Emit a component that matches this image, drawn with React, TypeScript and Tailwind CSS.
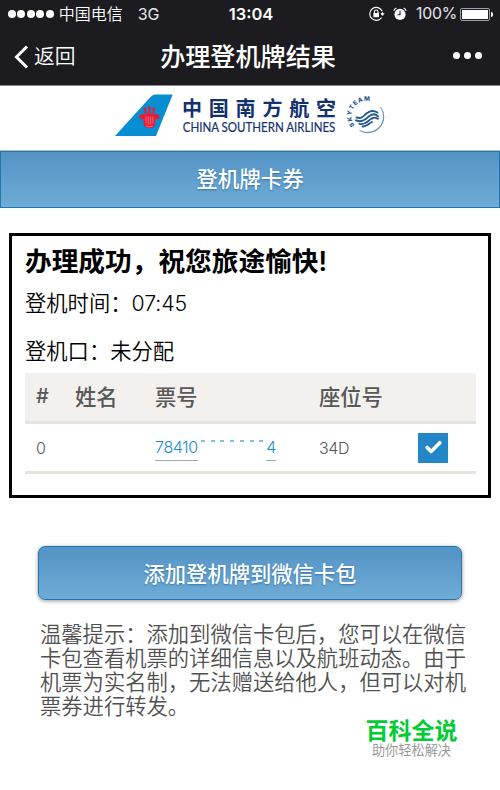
import { Check } from 'lucide-react';

interface Passenger {
  index: number;
  ticketStart: string;
  ticketEnd: string;
  seat: string;
  checked: boolean;
}

const passengers: Passenger[] = [
  { index: 0, ticketStart: '78410', ticketEnd: '4', seat: '34D', checked: true },
];

function StatusBar() {
  return (
    <div className="grid h-7 grid-cols-[1fr_auto_1fr] items-center pl-2 pr-[7px] text-[16px] leading-7">
      <div className="flex items-center">
        <div className="flex gap-[1.7px]">
          {[0, 1, 2, 3, 4].map((dot) => (
            <span key={dot} className="size-[7.8px] rounded-full bg-white" />
          ))}
        </div>
        <span className="-mt-[2px] ml-[5px] font-[350]">中国电信</span>
        <span className="ml-[15px] font-['Inter'] text-[16px] tracking-[-0.2px] text-gray-200">3G</span>
      </div>
      <span className="ml-[1px] font-['Inter'] text-[16.5px] font-semibold">13:04</span>
      <div className="flex items-center justify-end">
        <svg width="16" height="16" viewBox="0 0 16 16" fill="none" stroke="white" strokeWidth="1.1">
          <path d="M13.2 5.2A6.5 6.5 0 1 0 12.6 11.6M13.5 6.2v2.5" />
          <path d="M11.3 7.2h4.4l-2.2 2.7z" fill="white" stroke="none" />
          <rect x="4.4" y="7" width="5.6" height="4.2" fill="white" stroke="none" />
          <path d="M5.4 7.2V5.8a1.8 1.8 0 0 1 3.6 0v1.4" />
        </svg>
        <svg className="ml-2" width="14" height="14" viewBox="0 0 14 14" fill="none" stroke="white">
          <circle cx="7" cy="7.4" r="5.6" fill="white" stroke="none" />
          <path d="M.8 3.8A4 4 0 0 1 3.5.9M13.2 3.8A4 4 0 0 0 10.5.9" strokeWidth="1.1" />
          <path d="M7 3.8v4H4.5" stroke="#1c1b20" strokeWidth="1.1" />
        </svg>
        <span className="ml-[9px] w-[40px] whitespace-nowrap font-['Inter'] text-[15.8px] tracking-[-0.2px] text-gray-200">100%</span>
        <span className="ml-[4px] h-[13px] w-[30px] rounded-[2px] border border-gray-400 bg-white bg-clip-content p-px" />
        <span className="ml-px h-[5px] w-[2px] rounded-r-full bg-white" />
      </div>
    </div>
  );
}

function NavBar() {
  return (
    <div className="grid h-[57px] grid-cols-[1fr_auto_1fr] items-center pb-[2px] pl-[14px] pr-[18px]">
      <div className="flex items-center">
        <svg className="mt-[2px]" width="15" height="24" viewBox="0 0 15 24" fill="none" stroke="white" strokeWidth="3">
          <path d="M13 1.5L2.5 12L13 22.5" />
        </svg>
        <span className="ml-[5px] text-[20.8px] font-[350] leading-none">返回</span>
      </div>
      <h1 className="text-[25.1px] font-medium leading-none">办理登机牌结果</h1>
      <div className="flex justify-end gap-[4px]">
        <span className="size-[7px] rounded-full bg-white" />
        <span className="size-[7px] rounded-full bg-white" />
        <span className="size-[7px] rounded-full bg-white" />
      </div>
    </div>
  );
}

function AirlineLogo() {
  return (
    <svg className="overflow-visible" width="272" height="44" viewBox="114 94 272 44">
      <path d="M115 136L150.5 97Q153 94.6 156 94.6H172.7L156 136Z" fill="#078ed2" />
      <g fill="#e91c36">
        <path d="M139.2 118.5q-.4-4.3 3.3-4.6 2.2-.2 3.1 1.2.4-1.6 1.8-1.6 1.2 0 2 1.2.8-1.2 2-1.2 1.4 0 1.8 1.6.9-1.4 3.1-1.2 3.7.3 3.3 4.6l-4.4 1.1v3.4q-.2 5.1-5.8 5.1t-5.8-5.1v-3.4z" />
        <circle cx="145" cy="109" r="1.6" />
        <circle cx="149.4" cy="107.8" r="1.6" />
        <circle cx="153.8" cy="109" r="1.6" />
        <path d="M144.2 110h1.8l1.2 5h-2zM148.4 109h2v6h-2zM152.8 110h1.8l-1 5h-2z" />
      </g>
      <path d="M146 116.5v7M148.3 116.5v8M150.6 116.5v8M152.9 116.5v7M146 126q3.4 1.7 6.8 0" stroke="#f6a0a8" strokeWidth=".6" fill="none" />
      <text x="182" y="115.8" fontFamily="'Noto Sans CJK SC', sans-serif" fontWeight="700" fontSize="20" letterSpacing="6.8" fill="#14316f">中国南方航空</text>
      <text x="182.8" y="131.8" fontFamily="Lato, sans-serif" fontSize="14" textLength="152.5" lengthAdjust="spacingAndGlyphs" fill="#14316f" stroke="#14316f" strokeWidth=".2">CHINA SOUTHERN AIRLINES</text>
      <path id="skyteam" d="M354.8 125.3A13.2 13.2 0 1 1 378.5 106.5" fill="none" />
      <text fontFamily="Inter, sans-serif" fontSize="6.2" fontWeight="800" fill="#275994">
        <textPath href="#skyteam" textLength="37">SKYTEAM</textPath>
      </text>
      <path d="M380.5 107A16 16 0 0 1 359.5 130.5Q366 133.6 372.5 131.5A16 16 0 0 0 380.5 107Z" fill="#4f86b5" stroke="#4f86b5" strokeWidth=".5" />
      <g fill="none" stroke="#245894" strokeWidth="1.9" strokeLinecap="round">
        <path d="M356.5 117.5C361.5 119 363 116.5 366.5 113.5S374 110.5 377.5 112.5" />
        <path d="M356 120.3C362.5 123 365.5 119 369.5 116S376 114 378 116.3" />
        <path d="M359.5 123.8C365 125.5 367 121.5 371 119S375 117.7 378 118.7" />
        <path d="M362.5 126.5C366.5 127 368 124 372 122" />
      </g>
    </svg>
  );
}

function ResultCard() {
  return (
    <section className="mx-[9px] mt-[25px] h-[265px] border-[3.5px] border-black pl-[13px] pr-3 text-black">
      <h2 className="mt-[7px] whitespace-nowrap text-[26.7px] font-bold leading-[34px]">
        办理成功，祝您旅途愉快<span className="font-['Inter'] font-semibold">!</span>
      </h2>
      <p className="mt-[8px] text-[21.3px] font-[350] leading-8">
        登机时间：<span className="font-['Inter'] text-[21.3px] font-light tracking-[-0.1px]">07:45</span>
      </p>
      <p className="mt-[15px] text-[21.3px] font-[350] leading-8">登机口：未分配</p>
      <div className="mt-[7px] text-[16px] text-[#585858]">
        <div className="grid h-[51px] grid-cols-[50px_80px_164px_156px] items-center border-b-[3px] border-[#e6e4df] bg-[#f2f1ed] pb-[3px] text-[21.3px] font-medium leading-none">
          <span className="pl-[11px] font-['Inter'] text-[20px]">#</span>
          <span>姓名</span>
          <span>票号</span>
          <span>座位号</span>
        </div>
        {passengers.map((passenger) => (
          <div
            key={passenger.index}
            className="grid h-[50px] grid-cols-[50px_80px_164px_99px_auto] items-center border-b-[3px] border-[#e6e4df] font-['Inter'] text-[16px] font-light tracking-[-0.35px]"
          >
            <span className="pl-[11px]">{passenger.index}</span>
            <span />
            <a className="flex h-[27px] w-[121px] justify-between text-[#168bd1]">
              <span className="border-b border-[#aaa] pt-[1px]">{passenger.ticketStart}</span>
              <span className="mx-[3px] mt-[6px] flex flex-1 justify-between">
                {[0, 1, 2, 3, 4, 5, 6].map((dash) => (
                  <span key={dash} className="h-[1.5px] w-[4px] bg-[#80c0e5]" />
                ))}
              </span>
              <span className="border-b border-[#aaa] pt-[1px]">{passenger.ticketEnd}</span>
            </a>
            <span>{passenger.seat}</span>
            <span className="flex size-[30px] items-center justify-center bg-[#2386c6] text-white">
              {passenger.checked && <Check size={19} strokeWidth={4.5} />}
            </span>
          </div>
        ))}
      </div>
    </section>
  );
}

export default function App() {
  return (
    <main className="h-[790px] w-[500px] overflow-hidden bg-white font-['Noto_Sans_CJK_SC',sans-serif]">
      <header className="h-[85px] bg-[#1c1b20] text-white">
        <StatusBar />
        <NavBar />
      </header>
      <div className="flex h-[66px] justify-center border-y border-t-[#888] border-b-[#bbb] pt-2">
        <AirlineLogo />
      </div>
      <div className="flex h-[57px] items-center justify-center border border-[#2176ac] bg-linear-to-b from-[#5393c5] to-[#6facd7] pb-[2px] text-[21.5px] font-medium text-white text-shadow-[0_1px_2px_#3373a5]">
        登机牌卡券
      </div>

      <ResultCard />

      <button className="mx-auto mt-12 flex h-[54px] w-[424px] items-center justify-center rounded-[7px] border border-[#2176ac] bg-linear-to-b from-[#5393c5] to-[#6facd7] text-[21.3px] font-medium text-white shadow-[0_1px_4px_rgba(0,0,0,0.4)] text-shadow-[0_1px_2px_#3373a5]">
        添加登机牌到微信卡包
      </button>

      <p className="ml-10 mt-[21px] w-[428px] text-[21.3px] font-[350] leading-6 text-[#505050]">
        温馨提示：添加到微信卡包后，您可以在微信卡包查看机票的详细信息以及航班动态。由于机票为实名制，无法赠送给他人，但可以对机票券进行转发。
      </p>

      <div className="ml-[365px] w-[93px] text-center">
        <p className="whitespace-nowrap text-[23px] font-bold leading-6 text-[#00cc33]">百科全说</p>
        <p className="text-[13.2px] leading-[18px] text-[#999]">助你轻松解决</p>
      </div>
    </main>
  );
}
